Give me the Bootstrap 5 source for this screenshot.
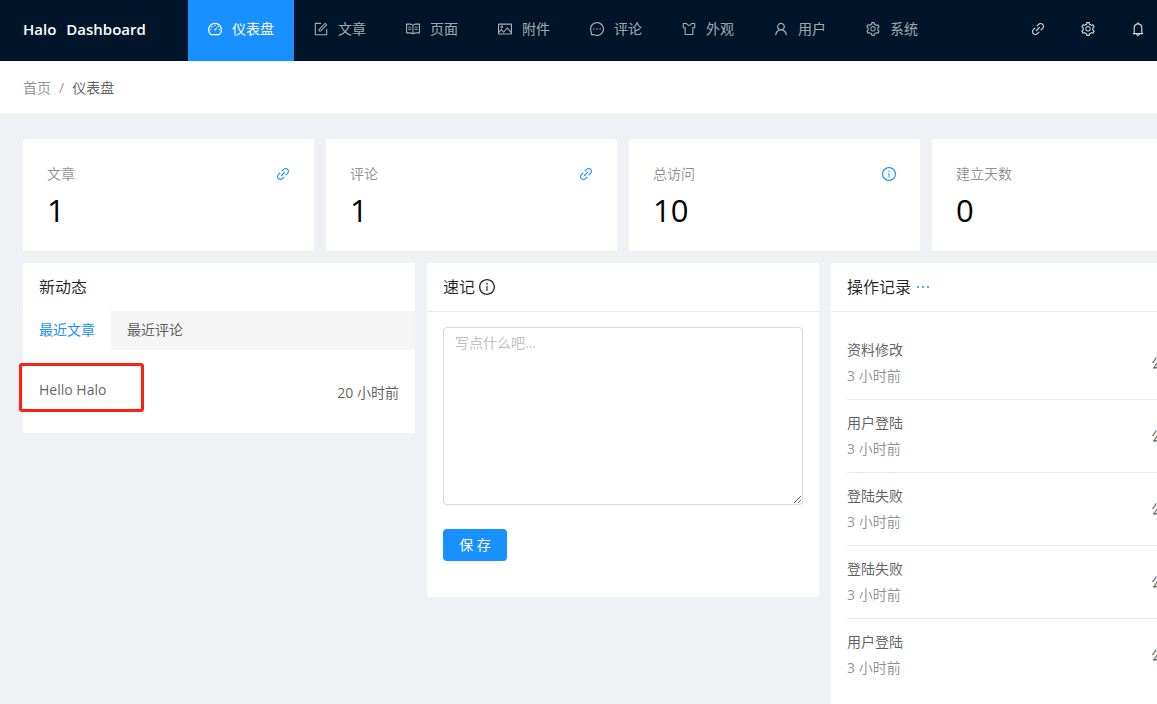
<!DOCTYPE html>
<html lang="zh-CN">
<head>
<meta charset="utf-8">
<meta name="viewport" content="width=device-width, initial-scale=1">
<title>仪表盘 - Halo Dashboard</title>
<link href="https://cdn.jsdelivr.net/npm/bootstrap@5.3.0/dist/css/bootstrap.min.css" rel="stylesheet">
<style>
  :root { --ink: rgba(0,0,0,.85); --text: rgba(0,0,0,.65); --muted: rgba(0,0,0,.45); --blue: #1890ff; --line: #e8e8e8; }
  body { font-family: "Open Sans", "Noto Sans CJK SC", sans-serif; font-size: 14px; line-height: 22px; color: var(--text); background: #f0f1f5; overflow-x: hidden; }
  a { text-decoration: none; }
  .icon { width: 14px; height: 14px; fill: currentColor; flex: none; display: block; }
  .topbar { background: #001529; height: 61px; padding-right: 12px; }
  .brand-name { width: 188px; padding: 0 0 3px 23px; gap: 10px; font-size: 15px; font-weight: 600; color: #fff; }
  .main-menu .nav-link { display: flex; align-items: center; gap: 10px; height: 61px; padding: 0 20px 3px; color: rgba(255,255,255,.65); }
  .main-menu .nav-link.active { background: var(--blue); color: #fff; }
  .tools { gap: 36px; padding-bottom: 3px; }
  .tools a { color: rgba(255,255,255,.85); }
  .crumbs { background: #fff; border-bottom: 1px solid var(--line); padding: 16px 23px 15px; }
  .crumbs .breadcrumb { --bs-breadcrumb-item-padding-x: 8px; --bs-breadcrumb-divider-color: var(--muted); --bs-breadcrumb-item-active-color: var(--text); }
  .crumbs a { color: var(--muted); }
  .page { min-height: 100vh; }
  .board { min-width: 1247px; padding: 24px 24px 0 23px; }
  .board .row { --bs-gutter-x: 12px; --bs-gutter-y: 12px; }
  .panel { background: #fff; border-radius: 2px; }
  .stat { padding: 24px 24px 20px; }
  .stat-label, .when { color: var(--muted); }
  .stat a, .more { color: var(--blue); }
  .stat-value { font-size: 31px; line-height: 42px; color: #000; margin-top: 4px; }
  .panel-head { height: 48px; padding: 0 16px; color: var(--ink); }
  .panel-head h2 { font-size: 16px; line-height: 24px; font-weight: 400; margin: 0; }
  .panel-head .icon { width: 16px; height: 16px; }
  .ruled { border-bottom: 1px solid var(--line); height: 49px; }
  .tabs { background: #f5f5f5; }
  .tabs button { border: 0; background: none; color: var(--text); padding: 8px 16px 9px; }
  .tabs button.active { background: #fff; color: var(--blue); border-radius: 2px 2px 0 0; }
  .posts { padding: 29px 16px; }
  .posts a { color: var(--text); font-weight: 500; }
  .post-date { padding-top: 3px; }
  .post-link { position: relative; }
  .highlight-box { position: absolute; inset: -16px -38px -11px -20px; border: 3px solid #ff2010; border-radius: 3px; pointer-events: none; }
  .note { padding: 15px 16px 36px; }
  .note textarea { height: 178px; padding: 4px 11px; font-size: 14px; line-height: 22px; border: 1px solid #d9d9d9; border-radius: 4px; resize: vertical; }
  .note textarea::placeholder { color: #bfbfbf; }
  .save { background: var(--blue); color: #fff; border: 0; border-radius: 4px; font-size: 14px; line-height: 22px; padding: 5px 15px; margin-top: 24px; min-width: 64px; }
  .logs { padding: 15px 16px; }
  .logs li { padding: 12px 0; border-bottom: 1px solid var(--line); }
  .logs li:last-child { border-bottom: 0; }
  .log-tag { width: 56px; }
</style>
</head>
<body>
<svg class="d-none" aria-hidden="true">
  <symbol id="dashboard" viewBox="64 64 896 896"><path d="M924.8 385.6a446.7 446.7 0 0 0-96-142.4 446.7 446.7 0 0 0-142.4-96C631.1 123.8 572.5 112 512 112s-119.1 11.8-174.4 35.2a446.7 446.7 0 0 0-142.4 96 446.7 446.7 0 0 0-96 142.4C75.8 440.9 64 499.5 64 560c0 132.7 58.3 257.7 159.9 343.1l1.7 1.4c5.8 4.8 13.1 7.5 20.6 7.5h531.7c7.5 0 14.8-2.7 20.6-7.5l1.7-1.4C901.7 817.7 960 692.7 960 560c0-60.5-11.9-119.1-35.2-174.4zM761.4 836H262.6A371.12 371.12 0 0 1 140 560c0-99.4 38.7-192.8 109-263 70.3-70.3 163.7-109 263-109 99.4 0 192.8 38.7 263 109 70.3 70.3 109 163.7 109 263 0 105.6-44.5 205.5-122.6 276zM623.5 421.5a8.03 8.03 0 0 0-11.3 0L527.7 506c-18.7-5-39.4-.2-54.1 14.5a55.95 55.95 0 0 0 0 79.2 55.95 55.95 0 0 0 79.2 0 55.87 55.87 0 0 0 14.5-54.1l84.5-84.5c3.1-3.1 3.1-8.2 0-11.3l-28.3-28.3zM490 320h44c4.4 0 8-3.6 8-8v-80c0-4.4-3.6-8-8-8h-44c-4.4 0-8 3.6-8 8v80c0 4.4 3.6 8 8 8zm260 218v44c0 4.4 3.6 8 8 8h80c4.4 0 8-3.6 8-8v-44c0-4.4-3.6-8-8-8h-80c-4.4 0-8 3.6-8 8zm12.7-197.2l-31.1-31.1a8.03 8.03 0 0 0-11.3 0l-56.6 56.6a8.03 8.03 0 0 0 0 11.3l31.1 31.1c3.1 3.1 8.2 3.1 11.3 0l56.6-56.6c3.1-3.1 3.1-8.2 0-11.3zm-458.6-31.1a8.03 8.03 0 0 0-11.3 0l-31.1 31.1a8.03 8.03 0 0 0 0 11.3l56.6 56.6c3.1 3.1 8.2 3.1 11.3 0l31.1-31.1c3.1-3.1 3.1-8.2 0-11.3l-56.6-56.6zM262 530h-80c-4.4 0-8 3.6-8 8v44c0 4.4 3.6 8 8 8h80c4.4 0 8-3.6 8-8v-44c0-4.4-3.6-8-8-8z"/></symbol>
  <symbol id="form" viewBox="64 64 896 896"><path d="M904 512h-56c-4.4 0-8 3.6-8 8v320H184V184h320c4.4 0 8-3.6 8-8v-56c0-4.4-3.6-8-8-8H144c-17.7 0-32 14.3-32 32v736c0 17.7 14.3 32 32 32h736c17.7 0 32-14.3 32-32V520c0-4.4-3.6-8-8-8z"/><path d="M355.9 534.9L354 653.8c-.1 8.9 7.1 16.2 16 16.2h.4l118-2.9c2-.1 4-.9 5.4-2.3l415.9-415c3.1-3.1 3.1-8.2 0-11.3L785.4 114.3c-1.6-1.6-3.6-2.3-5.7-2.3s-4.1.8-5.7 2.3l-415.8 415a8.3 8.3 0 0 0-2.3 5.6zm63.5 23.6L779.7 199l45.2 45.1-360.5 359.7-45.7 1.1.7-46.4z"/></symbol>
  <symbol id="read" viewBox="64 64 896 896"><path d="M928 161H699.2c-49.1 0-97.1 14.1-138.4 40.7L512 233l-48.8-31.3A255.2 255.2 0 0 0 324.8 161H96c-17.7 0-32 14.3-32 32v568c0 17.7 14.3 32 32 32h228.8c49.1 0 97.1 14.1 138.4 40.7l44.4 28.6c1.3.8 2.8 1.3 4.3 1.3s3-.4 4.3-1.3l44.4-28.6C602 807.1 650.1 793 699.2 793H928c17.7 0 32-14.3 32-32V193c0-17.7-14.3-32-32-32zM324.8 721H136V233h188.8c35.4 0 69.8 10.1 99.5 29.2l48.8 31.3 6.9 4.5v462c-47.6-25.6-100.8-39-155.2-39zm563.2 0H699.2c-54.4 0-107.6 13.4-155.2 39V298l6.9-4.5 48.8-31.3c29.7-19.1 64.1-29.2 99.5-29.2H888v488zM396.9 361H211.1c-3.9 0-7.1 3.4-7.1 7.5v45c0 4.1 3.2 7.5 7.1 7.5h185.7c3.9 0 7.1-3.4 7.1-7.5v-45c.1-4.1-3.1-7.5-7-7.5zm223.1 7.5v45c0 4.1 3.2 7.5 7.1 7.5h185.7c3.9 0 7.1-3.4 7.1-7.5v-45c0-4.1-3.2-7.5-7.1-7.5H627.1c-3.9 0-7.1 3.4-7.1 7.5zM396.9 501H211.1c-3.9 0-7.1 3.4-7.1 7.5v45c0 4.1 3.2 7.5 7.1 7.5h185.7c3.9 0 7.1-3.4 7.1-7.5v-45c.1-4.1-3.1-7.5-7-7.5zm416 0H627.1c-3.9 0-7.1 3.4-7.1 7.5v45c0 4.1 3.2 7.5 7.1 7.5h185.7c3.9 0 7.1-3.4 7.1-7.5v-45c.1-4.1-3.1-7.5-7-7.5z"/></symbol>
  <symbol id="picture" viewBox="64 64 896 896"><path d="M928 160H96c-17.7 0-32 14.3-32 32v640c0 17.7 14.3 32 32 32h832c17.7 0 32-14.3 32-32V192c0-17.7-14.3-32-32-32zm-40 632H136v-39.9l138.5-164.3 150.1 178L658.1 489 888 761.6V792zm0-129.8L664.2 396.8c-3.2-3.8-9-3.8-12.2 0L424.6 666.4l-144-170.7c-3.2-3.8-9-3.8-12.2 0L136 652.7V232h752v430.2zM304 456a88 88 0 1 0 0-176 88 88 0 0 0 0 176zm0-116c15.5 0 28 12.5 28 28s-12.5 28-28 28-28-12.5-28-28 12.5-28 28-28z"/></symbol>
  <symbol id="message" viewBox="64 64 896 896"><path d="M464 512a48 48 0 1 0 96 0 48 48 0 1 0-96 0zm200 0a48 48 0 1 0 96 0 48 48 0 1 0-96 0zm-400 0a48 48 0 1 0 96 0 48 48 0 1 0-96 0zm661.2-173.6c-22.6-53.7-55-101.9-96.3-143.3a444.35 444.35 0 0 0-143.3-96.3C630.6 75.7 572.2 64 512 64h-2c-60.6.3-119.3 12.3-174.5 35.9a445.35 445.35 0 0 0-142 96.5c-40.9 41.3-73 89.3-95.2 142.8-23 55.4-34.6 114.3-34.3 174.9A449.4 449.4 0 0 0 112 714v152a46 46 0 0 0 46 46h152.1A449.4 449.4 0 0 0 510 960h2.1c59.9 0 118-11.6 172.7-34.3a444.48 444.48 0 0 0 142.8-95.2c41.3-40.9 73.8-88.7 96.5-142 23.6-55.2 35.6-113.9 35.9-174.5.3-60.9-11.5-120-34.8-175.6zm-151.1 438C704 845.8 611 884 512 884h-1.7c-60.3-.3-120.2-15.3-173.1-43.5l-8.4-4.5H188V695.2l-4.5-8.4C155.3 633.9 140.3 574 140 513.7c-.4-99.7 37.7-193.3 107.6-263.8 69.8-70.5 163.1-109.5 262.8-109.9h1.7c50 0 98.5 9.7 144.2 28.9 44.6 18.7 84.6 45.6 119 80 34.3 34.3 61.3 74.4 80 119 19.4 46.2 29.1 95.2 28.9 145.8-.6 99.6-39.7 192.9-110.1 262.7z"/></symbol>
  <symbol id="skin" viewBox="64 64 896 896"><path d="M870 126H663.8c-17.4 0-32.9 11.9-37 29.3C614.3 208.1 567 246 512 246s-102.3-37.9-114.8-90.7a37.93 37.93 0 0 0-37-29.3H154a44 44 0 0 0-44 44v252a44 44 0 0 0 44 44h75v388a44 44 0 0 0 44 44h478a44 44 0 0 0 44-44V466h75a44 44 0 0 0 44-44V170a44 44 0 0 0-44-44zm-28 268H723v432H301V394H182V198h153.3c28.2 71.2 97.5 120 176.7 120s148.5-48.8 176.7-120H842v196z"/></symbol>
  <symbol id="user" viewBox="64 64 896 896"><path d="M858.5 763.6a374 374 0 0 0-80.6-119.5 375.63 375.63 0 0 0-119.5-80.6c-.4-.2-.8-.3-1.2-.5C719.5 518 760 444.7 760 362c0-137-111-248-248-248S264 225 264 362c0 82.7 40.5 156 102.8 201.1-.4.2-.8.3-1.2.5-44.8 18.9-85 46-119.5 80.6a375.63 375.63 0 0 0-80.6 119.5A371.7 371.7 0 0 0 136 901.8a8 8 0 0 0 8 8.2h60c4.4 0 7.9-3.5 8-7.8 2-77.2 33-149.5 87.8-204.3 56.7-56.7 132-87.9 212.2-87.9s155.5 31.2 212.2 87.9C779 752.7 810 825 812 902.2c.1 4.4 3.6 7.8 8 7.8h60a8 8 0 0 0 8-8.2c-1-47.8-10.9-94.3-29.5-138.2zM512 534c-45.9 0-89.1-17.9-121.6-50.4S340 407.9 340 362c0-45.9 17.9-89.1 50.4-121.6S466.1 190 512 190s89.1 17.9 121.6 50.4S684 316.1 684 362c0 45.9-17.9 89.1-50.4 121.6S557.9 534 512 534z"/></symbol>
  <symbol id="setting" viewBox="64 64 896 896"><path d="M924.8 625.7l-65.5-56c3.1-19 4.7-38.4 4.7-57.8s-1.6-38.8-4.7-57.8l65.5-56a32.03 32.03 0 0 0 9.3-35.2l-.9-2.6a443.74 443.74 0 0 0-79.7-137.9l-1.8-2.1a32.12 32.12 0 0 0-35.1-9.5l-81.3 28.9c-30-24.6-63.5-44-99.7-57.6l-15.7-85a32.05 32.05 0 0 0-25.8-25.7l-2.7-.5c-52.1-9.4-106.9-9.4-159 0l-2.7.5a32.05 32.05 0 0 0-25.8 25.7l-15.8 85.4a351.86 351.86 0 0 0-99 57.4l-81.9-29.1a32 32 0 0 0-35.1 9.5l-1.8 2.1a446.02 446.02 0 0 0-79.7 137.9l-.9 2.6c-4.5 12.5-.8 26.5 9.3 35.2l66.3 56.6c-3.1 18.8-4.6 38-4.6 57.1 0 19.2 1.5 38.4 4.6 57.1L99 625.5a32.03 32.03 0 0 0-9.3 35.2l.9 2.6c18.1 50.4 44.9 96.9 79.7 137.9l1.8 2.1a32.12 32.12 0 0 0 35.1 9.5l81.9-29.1c29.8 24.5 63.1 43.9 99 57.4l15.8 85.4a32.05 32.05 0 0 0 25.8 25.7l2.7.5a449.4 449.4 0 0 0 159 0l2.7-.5a32.05 32.05 0 0 0 25.8-25.7l15.7-85a350 350 0 0 0 99.7-57.6l81.3 28.9a32 32 0 0 0 35.1-9.5l1.8-2.1c34.8-41.1 61.6-87.5 79.7-137.9l.9-2.6c4.5-12.3.8-26.3-9.3-35zM788.3 465.9c2.5 15.1 3.8 30.6 3.8 46.1s-1.3 31-3.8 46.1l-6.6 40.1 74.7 63.9a370.03 370.03 0 0 1-42.6 73.6L721 702.8l-31.4 25.8c-23.9 19.6-50.5 35-79.3 45.8l-38.1 14.3-17.9 97a377.5 377.5 0 0 1-85 0l-17.9-97.2-37.8-14.5c-28.5-10.8-55-26.2-78.7-45.7l-31.4-25.9-93.4 33.2c-17-22.9-31.2-47.6-42.6-73.6l75.5-64.5-6.5-40c-2.4-14.9-3.7-30.3-3.7-45.5 0-15.3 1.2-30.6 3.7-45.5l6.5-40-75.5-64.5c11.3-26.1 25.6-50.7 42.6-73.6l93.4 33.2 31.4-25.9c23.7-19.5 50.2-34.9 78.7-45.7l37.9-14.3 17.9-97.2c28.1-3.2 56.8-3.2 85 0l17.9 97 38.1 14.3c28.7 10.8 55.4 26.2 79.3 45.8l31.4 25.8 92.8-32.9c17 22.9 31.2 47.6 42.6 73.6L781.8 426l6.5 39.9zM512 326c-97.2 0-176 78.8-176 176s78.8 176 176 176 176-78.8 176-176-78.8-176-176-176zm79.2 255.2A111.6 111.6 0 0 1 512 614c-29.9 0-58-11.7-79.2-32.8A111.6 111.6 0 0 1 400 502c0-29.9 11.7-58 32.8-79.2C454 401.6 482.1 390 512 390c29.9 0 58 11.6 79.2 32.8A111.6 111.6 0 0 1 624 502c0 29.9-11.7 58-32.8 79.2z"/></symbol>
  <symbol id="link" viewBox="64 64 896 896"><path d="M574 665.4a8.03 8.03 0 0 0-11.3 0L446.5 781.6c-53.8 53.8-144.6 59.5-204 0-59.5-59.5-53.8-150.2 0-204l116.2-116.2c3.1-3.1 3.1-8.2 0-11.3l-39.8-39.8a8.03 8.03 0 0 0-11.3 0L191.4 526.5c-84.6 84.6-84.6 221.5 0 306s221.5 84.6 306 0l116.2-116.2c3.1-3.1 3.1-8.2 0-11.3L574 665.4zm258.6-474c-84.6-84.6-221.5-84.6-306 0L410.3 307.6a8.03 8.03 0 0 0 0 11.3l39.7 39.7c3.1 3.1 8.2 3.1 11.3 0l116.2-116.2c53.8-53.8 144.6-59.5 204 0 59.5 59.5 53.8 150.2 0 204L665.3 562.6a8.03 8.03 0 0 0 0 11.3l39.8 39.8c3.1 3.1 8.2 3.1 11.3 0l116.2-116.2c84.5-84.6 84.5-221.5 0-306.1zM610.1 372.3a8.03 8.03 0 0 0-11.3 0L372.3 598.7a8.03 8.03 0 0 0 0 11.3l39.6 39.6c3.1 3.1 8.2 3.1 11.3 0l226.4-226.4c3.1-3.1 3.1-8.2 0-11.3l-39.5-39.6z"/></symbol>
  <symbol id="bell" viewBox="64 64 896 896"><path d="M816 768h-24V428c0-141.1-104.3-257.7-240-277.1V112c0-22.1-17.9-40-40-40s-40 17.9-40 40v38.9c-135.7 19.4-240 136-240 277.1v340h-24c-17.7 0-32 14.3-32 32v32c0 4.4 3.6 8 8 8h216c0 61.8 50.2 112 112 112s112-50.2 112-112h216c4.4 0 8-3.6 8-8v-32c0-17.7-14.3-32-32-32zM512 888c-26.5 0-48-21.5-48-48h96c0 26.5-21.5 48-48 48zM304 768V428c0-55.6 21.6-107.8 60.9-147.1S456.4 220 512 220c55.6 0 107.8 21.6 147.1 60.9S720 372.4 720 428v340H304z"/></symbol>
  <symbol id="info" viewBox="64 64 896 896"><path d="M512 64C264.6 64 64 264.6 64 512s200.6 448 448 448 448-200.6 448-448S759.4 64 512 64zm0 820c-205.4 0-372-166.6-372-372s166.6-372 372-372 372 166.6 372 372-166.6 372-372 372z"/><path d="M464 336a48 48 0 1 0 96 0 48 48 0 1 0-96 0zm72 112h-48c-4.4 0-8 3.6-8 8v272c0 4.4 3.6 8 8 8h48c4.4 0 8-3.6 8-8V456c0-4.4-3.6-8-8-8z"/></symbol>
  <symbol id="ellipsis" viewBox="64 64 896 896"><path d="M176 511a56 56 0 1 0 112 0 56 56 0 1 0-112 0zm280 0a56 56 0 1 0 112 0 56 56 0 1 0-112 0zm280 0a56 56 0 1 0 112 0 56 56 0 1 0-112 0z"/></symbol>
</svg>

<div class="page d-flex flex-column overflow-hidden">
  <header class="topbar d-flex align-items-center">
    <div class="brand-name d-flex"><span>Halo</span><span>Dashboard</span></div>
    <nav class="main-menu nav flex-nowrap" aria-label="主菜单">
      <a class="nav-link active" href="#" aria-current="page"><svg class="icon"><use href="#dashboard"/></svg>仪表盘</a>
      <a class="nav-link" href="#"><svg class="icon"><use href="#form"/></svg>文章</a>
      <a class="nav-link" href="#"><svg class="icon"><use href="#read"/></svg>页面</a>
      <a class="nav-link" href="#"><svg class="icon"><use href="#picture"/></svg>附件</a>
      <a class="nav-link" href="#"><svg class="icon"><use href="#message"/></svg>评论</a>
      <a class="nav-link" href="#"><svg class="icon"><use href="#skin"/></svg>外观</a>
      <a class="nav-link" href="#"><svg class="icon"><use href="#user"/></svg>用户</a>
      <a class="nav-link" href="#"><svg class="icon"><use href="#setting"/></svg>系统</a>
    </nav>
    <div class="tools d-flex ms-auto">
      <a href="#" aria-label="查看站点"><svg class="icon"><use href="#link"/></svg></a>
      <a href="#" aria-label="设置"><svg class="icon"><use href="#setting"/></svg></a>
      <a href="#" aria-label="通知"><svg class="icon"><use href="#bell"/></svg></a>
    </div>
  </header>

  <nav class="crumbs" aria-label="breadcrumb">
    <ol class="breadcrumb mb-0">
      <li class="breadcrumb-item"><a href="#">首页</a></li>
      <li class="breadcrumb-item active" aria-current="page">仪表盘</li>
    </ol>
  </nav>

  <main class="board d-flex flex-column flex-grow-1">
    <div class="row">
      <div class="col-3"><section class="panel stat">
        <div class="d-flex justify-content-between align-items-center"><span class="stat-label">文章</span><a href="#" aria-label="文章"><svg class="icon"><use href="#link"/></svg></a></div>
        <div class="stat-value">1</div>
      </section></div>
      <div class="col-3"><section class="panel stat">
        <div class="d-flex justify-content-between align-items-center"><span class="stat-label">评论</span><a href="#" aria-label="评论"><svg class="icon"><use href="#link"/></svg></a></div>
        <div class="stat-value">1</div>
      </section></div>
      <div class="col-3"><section class="panel stat">
        <div class="d-flex justify-content-between align-items-center"><span class="stat-label">总访问</span><a href="#" aria-label="总访问"><svg class="icon"><use href="#info"/></svg></a></div>
        <div class="stat-value">10</div>
      </section></div>
      <div class="col-3"><section class="panel stat">
        <div class="stat-label">建立天数</div>
        <div class="stat-value">0</div>
      </section></div>
    </div>

    <div class="row flex-grow-1 mt-0">
      <div class="col-4"><section class="panel">
        <div class="panel-head d-flex align-items-center"><h2>新动态</h2></div>
        <div class="tabs d-flex" role="tablist">
          <button class="active" type="button" role="tab" aria-selected="true">最近文章</button>
          <button type="button" role="tab" aria-selected="false">最近评论</button>
        </div>
        <div class="posts d-flex justify-content-between align-items-start">
          <div class="post-link"><a href="#">Hello Halo</a><span class="highlight-box"></span></div>
          <div class="post-date">20 小时前</div>
        </div>
      </section></div>

      <div class="col-4"><section class="panel">
        <div class="panel-head ruled d-flex align-items-center gap-1"><h2><label for="note">速记</label></h2><svg class="icon"><use href="#info"/></svg></div>
        <form class="note">
          <textarea class="form-control" id="note" placeholder="写点什么吧..."></textarea>
          <button class="save" type="button">保 存</button>
        </form>
      </section></div>

      <div class="col-4 d-flex"><section class="panel flex-grow-1">
        <div class="panel-head ruled d-flex align-items-center gap-1"><h2>操作记录</h2><a class="more" href="#" aria-label="更多"><svg class="icon"><use href="#ellipsis"/></svg></a></div>
        <ul class="logs list-unstyled mb-0">
          <li class="d-flex justify-content-between align-items-center"><div><div class="mb-1">资料修改</div><div class="when">3 小时前</div></div><span class="log-tag">公</span></li>
          <li class="d-flex justify-content-between align-items-center"><div><div class="mb-1">用户登陆</div><div class="when">3 小时前</div></div><span class="log-tag">公</span></li>
          <li class="d-flex justify-content-between align-items-center"><div><div class="mb-1">登陆失败</div><div class="when">3 小时前</div></div><span class="log-tag">公</span></li>
          <li class="d-flex justify-content-between align-items-center"><div><div class="mb-1">登陆失败</div><div class="when">3 小时前</div></div><span class="log-tag">公</span></li>
          <li class="d-flex justify-content-between align-items-center"><div><div class="mb-1">用户登陆</div><div class="when">3 小时前</div></div><span class="log-tag">公</span></li>
        </ul>
      </section></div>
    </div>
  </main>
</div>
<script src="https://cdn.jsdelivr.net/npm/bootstrap@5.3.0/dist/js/bootstrap.bundle.min.js"></script>
</body>
</html>
